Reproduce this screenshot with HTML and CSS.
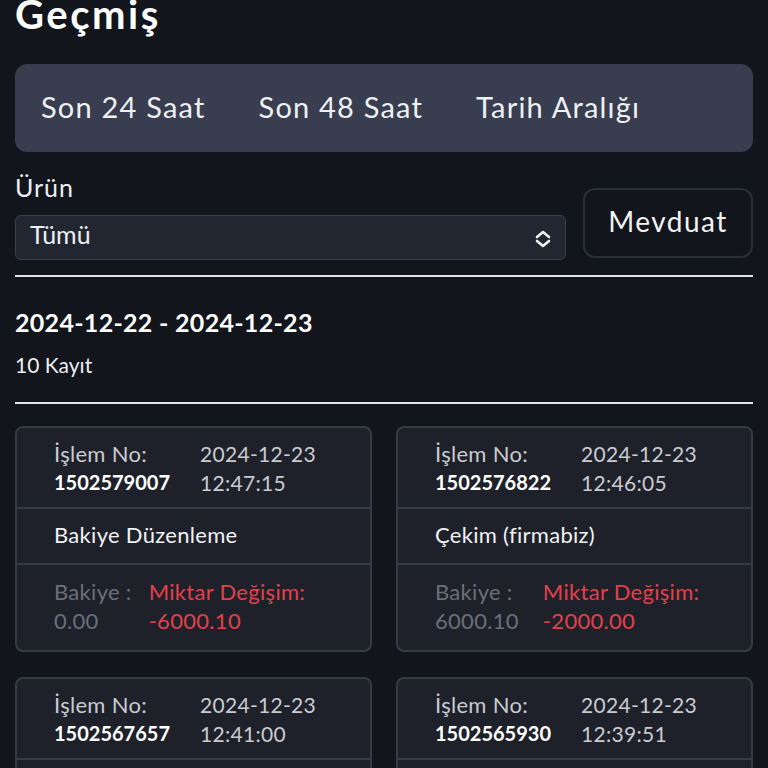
FILE: index.html
```html
<!DOCTYPE html>
<html lang="tr">
<head>
    <meta charset="utf-8">
    <meta name="viewport" content="width=device-width, initial-scale=1">
    <title>Geçmiş</title>
    <link rel="stylesheet" href="styles.css">
</head>
<body>

<div class="page">
    <h1 class="title">Geçmiş</h1>

    <div class="tabs">
        <button class="tab">Son 24 Saat</button>
        <button class="tab">Son 48 Saat</button>
        <button class="tab">Tarih Aralığı</button>
    </div>

    <div class="filter-row">
        <div class="filter-field">
            <label class="filter-label">Ürün</label>
            <div class="select">
                <span class="select-value">Tümü</span>
                <svg class="select-icon" width="18" height="20" viewBox="0 0 18 20">
                    <path d="M3 8 L9 3 L15 8" fill="none" stroke="#f1f2f4" stroke-width="2.6" stroke-linecap="round" stroke-linejoin="round"/>
                    <path d="M3 12 L9 17 L15 12" fill="none" stroke="#f1f2f4" stroke-width="2.6" stroke-linecap="round" stroke-linejoin="round"/>
                </svg>
            </div>
        </div>
        <button class="deposit-btn">Mevduat</button>
    </div>

    <hr class="divider">

    <div class="range">2024-12-22 - 2024-12-23</div>
    <div class="count">10 Kayıt</div>

    <hr class="divider divider-list">

    <div class="cards">
        <div class="card">
            <div class="card-head">
                <div class="col">
                    <div class="muted">İşlem No:</div>
                    <div class="strong">1502579007</div>
                </div>
                <div class="col date">
                    <div class="muted">2024-12-23</div>
                    <div class="muted">12:47:15</div>
                </div>
            </div>
            <div class="card-type">Bakiye Düzenleme</div>
            <div class="card-foot">
                <div class="col">
                    <div class="dim">Bakiye :</div>
                    <div class="dim">0.00</div>
                </div>
                <div class="col red">
                    <div>Miktar Değişim:</div>
                    <div>-6000.10</div>
                </div>
            </div>
        </div>

        <div class="card">
            <div class="card-head">
                <div class="col">
                    <div class="muted">İşlem No:</div>
                    <div class="strong">1502576822</div>
                </div>
                <div class="col date">
                    <div class="muted">2024-12-23</div>
                    <div class="muted">12:46:05</div>
                </div>
            </div>
            <div class="card-type">Çekim (firmabiz)</div>
            <div class="card-foot wide">
                <div class="col">
                    <div class="dim">Bakiye :</div>
                    <div class="dim">6000.10</div>
                </div>
                <div class="col red">
                    <div>Miktar Değişim:</div>
                    <div>-2000.00</div>
                </div>
            </div>
        </div>

        <div class="card">
            <div class="card-head">
                <div class="col">
                    <div class="muted">İşlem No:</div>
                    <div class="strong">1502567657</div>
                </div>
                <div class="col date">
                    <div class="muted">2024-12-23</div>
                    <div class="muted">12:41:00</div>
                </div>
            </div>
            <div class="card-type">Yatırım (firmabiz)</div>
            <div class="card-foot wide">
                <div class="col">
                    <div class="dim">Bakiye :</div>
                    <div class="dim">8000.10</div>
                </div>
                <div class="col green">
                    <div>Miktar Değişim:</div>
                    <div>2000.00</div>
                </div>
            </div>
        </div>

        <div class="card">
            <div class="card-head">
                <div class="col">
                    <div class="muted">İşlem No:</div>
                    <div class="strong">1502565930</div>
                </div>
                <div class="col date">
                    <div class="muted">2024-12-23</div>
                    <div class="muted">12:39:51</div>
                </div>
            </div>
            <div class="card-type">Çekim (firmabiz)</div>
            <div class="card-foot wide">
                <div class="col">
                    <div class="dim">Bakiye :</div>
                    <div class="dim">6000.10</div>
                </div>
                <div class="col red">
                    <div>Miktar Değişim:</div>
                    <div>-2000.00</div>
                </div>
            </div>
        </div>
    </div>
</div>

</body>
</html>
```

FILE: styles.css
```css
body {
    margin: 0;
    background-color: #12151c;
    color: #eceef1;
    font-family: Lato, "Noto Sans", sans-serif;
}

.page {
    padding: 0 15px 40px;
}

.title {
    margin: -8px 0 0;
    font-size: 40px;
    line-height: 44px;
    font-weight: 700;
    letter-spacing: 2.5px;
    color: #ffffff;
}

.tabs {
    margin-top: 28px;
    height: 88px;
    box-sizing: border-box;
    display: flex;
    align-items: center;
    gap: 53px;
    padding: 0 26px 4px;
    background-color: #383e4f;
    border-radius: 12px;
}

.tab {
    padding: 0;
    border: none;
    background: none;
    color: #eef0f3;
    font-family: inherit;
    font-size: 29px;
    letter-spacing: 1.2px;
    cursor: pointer;
}

.filter-row {
    margin-top: 20px;
    display: flex;
    align-items: flex-end;
    gap: 17px;
}

.filter-field {
    flex: 1;
}

.filter-label {
    display: block;
    font-size: 25px;
    line-height: 30px;
    letter-spacing: 1px;
    margin-bottom: 13px;
}

.select {
    height: 45px;
    box-sizing: border-box;
    display: flex;
    align-items: center;
    justify-content: space-between;
    padding: 0 13px 0 14px;
    border: 1px solid #3b404c;
    border-radius: 6px;
    background-color: #222630;
    font-size: 25px;
    line-height: 30px;
}

.select-value {
    margin-bottom: 7px;
}

.select-icon {
    display: block;
    margin-top: 2px;
}

.deposit-btn {
    width: 170px;
    height: 70px;
    margin-bottom: 2px;
    padding: 0 0 4px;
    border: 2px solid #2a2e38;
    border-radius: 12px;
    background: none;
    color: #f2f3f5;
    font-family: inherit;
    font-size: 28px;
    letter-spacing: 1.5px;
    cursor: pointer;
}

.divider {
    margin: 15px 0 0;
    border: none;
    border-top: 2px solid #e2e4e8;
}

.range {
    margin-top: 30px;
    font-size: 25px;
    line-height: 30px;
    font-weight: 700;
    letter-spacing: 0.3px;
    color: #ffffff;
}

.count {
    margin-top: 15px;
    font-size: 21px;
    line-height: 26px;
}

.divider-list {
    margin-top: 24px;
}

.cards {
    margin-top: 22px;
    display: grid;
    grid-template-columns: 1fr 1fr;
    column-gap: 24px;
    row-gap: 25px;
}

.card {
    border: 2px solid #373b46;
    border-radius: 8px;
    background-color: #1e2129;
    font-size: 22px;
    line-height: 29px;
    letter-spacing: 0.3px;
}

.card-head,
.card-foot {
    display: flex;
    gap: 30px;
}

.card-head {
    padding: 11px 37px 10px;
    border-bottom: 2px solid #373b46;
}

.date {
    font-size: 21px;
}

.card-type {
    padding: 11px 37px 14px;
    border-bottom: 2px solid #373b46;
    color: #f0f1f4;
}

.card-foot {
    padding: 12px 37px 15px;
    gap: 17px;
}

.card-foot.wide {
    gap: 24px;
}

.muted {
    color: #c9cbd1;
}

.strong {
    font-size: 20px;
    font-weight: 700;
    letter-spacing: 0;
    color: #ffffff;
}

.dim {
    color: #6b6f79;
}

.red {
    color: #e3404c;
}

.green {
    color: #3fbf6e;
}
```
